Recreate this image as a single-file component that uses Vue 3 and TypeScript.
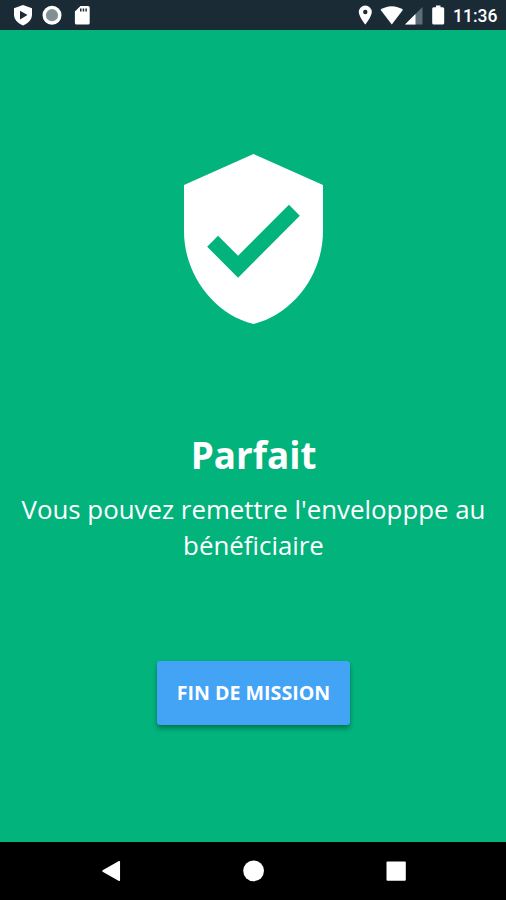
<script setup lang="ts">
const time: string = '11:36'
const title: string = 'Parfait'
const lines: string[] = ["Vous pouvez remettre l'envelopppe au", 'bénéficiaire']
const action: string = 'Fin de mission'
</script>

<template>
  <div class="screen">
    <header class="status">
      <svg class="status-left" width="90" height="30" viewBox="0 0 90 30">
        <path fill="#fff" d="M23 5l9 3.200v6.300c0 5-3.500 8.800-9 11-5.500-2.200-9-6-9-11V8.200z" />
        <path fill="#1a2b36" d="M20 10.800l7.500 4.300-7.500 4.300z" />
        <circle cx="52" cy="15.200" r="7.800" fill="#829093" stroke="#fff" stroke-width="3.400" />
        <path fill="#fff" d="M80.500 6H88q1.700 0 1.700 1.700v15.200q0 1.700-1.700 1.700H76.600q-1.700 0-1.700-1.700V11.500z" />
        <path fill="#1a2b36" d="M80 8.500h1.500v3H80zM82.700 8.500h1.500v3h-1.500zM85.400 8.500h1.500v3h-1.500z" />
      </svg>
      <svg class="status-right" width="90" height="30" viewBox="356 0 90 30">
        <path fill="#fff" fill-rule="evenodd" d="M365.300 5.500a6.500 6.500 0 0 1 6.500 6.500c0 4.500-6.500 12.500-6.500 12.500s-6.500-8-6.500-12.500a6.500 6.500 0 0 1 6.500-6.500zm0 4.300a2.200 2.200 0 1 0 0 4.400 2.200 2.200 0 0 0 0-4.400z" />
        <path fill="#fff" d="M380.500 9.800c6.500-4.800 16-4.800 22.500 0L391.800 24.500z" />
        <path fill="#5f6e76" d="M422.500 7v17.500H405z" />
        <path fill="#fff" d="M415.500 14v10.500H405z" />
        <path fill="#fff" d="M436 5.500h4.500v1.700h2.200q1.500 0 1.500 1.500v14.300q0 1.500-1.500 1.500h-9q-1.500 0-1.500-1.500V8.700q0-1.500 1.500-1.500h2.300z" />
      </svg>
      <span class="time">{{ time }}</span>
    </header>

    <main class="content">
      <svg class="shield" width="139" height="170" viewBox="3 1 18 22" preserveAspectRatio="none">
        <path fill="#fff" d="M12 1L3 5v6c0 5.550 3.840 10.740 9 12 5.160-1.260 9-6.450 9-12V5l-9-4zm-2 16l-4-4 1.410-1.410L10 14.170l6.590-6.590L18 9l-8 8z" />
      </svg>
      <h1 class="title">{{ title }}</h1>
      <p class="message">
        <span v-for="line in lines" :key="line" class="line">{{ line }}</span>
      </p>
      <button class="action" type="button">{{ action }}</button>
    </main>

    <nav class="navbar">
      <svg width="506" height="58" viewBox="0 842 506 58">
        <path fill="#fff" stroke="#fff" stroke-width="1.500" stroke-linejoin="round" d="M103 871l16.300-9.300v18.600z" />
        <circle cx="253.600" cy="870.800" r="10.400" fill="#fff" />
        <rect x="386.500" y="861.500" width="19.300" height="19.300" rx="1" fill="#fff" />
      </svg>
    </nav>
  </div>
</template>

<style>
body {
  margin: 0;
}
</style>

<style scoped>
.screen {
  width: 506px;
  height: 900px;
  display: flex;
  flex-direction: column;
  overflow: hidden;
  background: #03b37c;
  font-family: "Open Sans", "Noto Sans", sans-serif;
  color: #fff;
}
.status {
  height: 30px;
  flex: none;
  display: flex;
  background: #1a2b36;
}
.status-left {
  flex: none;
}
.status-right {
  flex: none;
  margin-left: 266px;
}
.time {
  margin-left: 7px;
  font: 500 17.500px/32px Roboto, sans-serif;
  white-space: nowrap;
}
.content {
  flex: 1;
  display: flex;
  flex-direction: column;
  align-items: center;
}
.shield {
  margin: 123.500px 0 0 1px;
  flex: none;
}
.title {
  margin: 106px 0 0 1px;
  font-size: 36.800px;
  line-height: 51px;
  font-weight: 700;
}
.message {
  margin: 10px 0 0 1px;
  font-size: 25.850px;
  line-height: 36px;
  text-align: center;
}
.line {
  display: block;
  white-space: nowrap;
}
.action {
  width: 193px;
  height: 64px;
  margin: 98px 0 0 1px;
  padding: 0;
  border: 0;
  border-radius: 3px;
  background: #43a3f5;
  box-shadow: 0 4px 5px rgba(0, 0, 0, 0.26), 0 1px 3px rgba(0, 0, 0, 0.12);
  color: #fff;
  font: 700 19.600px/64px "Open Sans", "Noto Sans", sans-serif;
  text-transform: uppercase;
  white-space: nowrap;
}
.navbar {
  height: 58px;
  flex: none;
  background: #000;
}
.navbar svg {
  display: block;
}
</style>
